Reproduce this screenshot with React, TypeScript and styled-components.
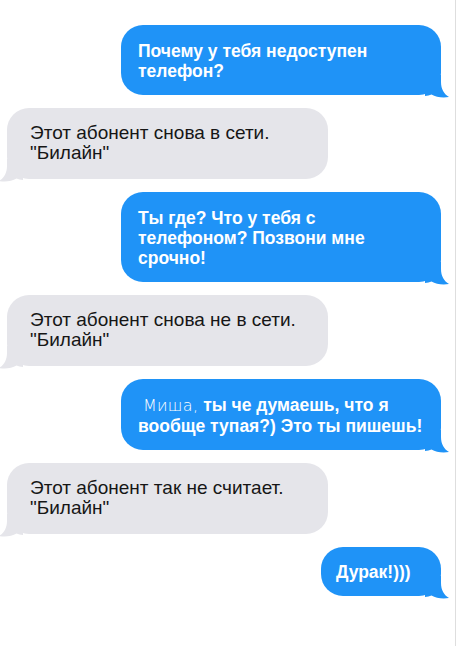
import React from "react";
import styled, { createGlobalStyle } from "styled-components";

const Global = createGlobalStyle`
  html, body { margin: 0; padding: 0; background: #fff; }
  body { font-family: "Liberation Sans", Arial, sans-serif; }
`;

const Screen = styled.div`
  box-sizing: border-box;
  width: 456px;
  min-height: 646px;
  border-right: 1px solid #dedede;
  padding: 25px 0 0;
  display: flex;
  flex-direction: column;
  gap: 13px;
`;

const Row = styled.div<{ $out?: boolean }>`
  display: flex;
  justify-content: ${(p) => (p.$out ? "flex-end" : "flex-start")};
  padding: ${(p) => (p.$out ? "0 14px 0 0" : "0 0 0 7px")};
`;

const Bubble = styled.div<{ $out?: boolean; $w?: number; $short?: boolean }>`
  position: relative;
  box-sizing: border-box;
  width: ${(p) => (p.$w ? `${p.$w}px` : "auto")};
  padding: ${(p) =>
    p.$short ? "15px 16px 14px 15px" : p.$out ? "16px 16px 14px 17px" : "15px 16px 16px 23px"};
  border-radius: 22px;
  background: ${(p) => (p.$out ? "#1f93f7" : "#e5e5ea")};
  color: ${(p) => (p.$out ? "#ffffff" : "#161616")};
  font-size: ${(p) => (p.$out ? "17.5px" : "19px")};
  line-height: 20px;
  font-weight: ${(p) => (p.$out ? 700 : 400)};
  white-space: nowrap;
`;

const Tail = styled.svg<{ $out?: boolean }>`
  position: absolute;
  bottom: -3px;
  width: 24px;
  height: 23px;
  ${(p) => (p.$out ? "right: -8px;" : "left: -8px; transform: scaleX(-1);")}
`;

const Hand = styled.span`
  font-family: "Comic Sans MS", "DejaVu Sans", cursive;
  font-size: 16px;
  font-weight: 300;
  letter-spacing: 0.3px;
`;

function BubbleTail({ out, color }: { out?: boolean; color: string }) {
  return (
    <Tail $out={out} viewBox="0 0 24 23" aria-hidden>
      <path
        d="M0 0 H16 V7 C16 14 19 19 24 22 C17 23 11 22 6.5 19.5 C4.5 20.3 2.5 20.8 0 21 Z"
        fill={color}
      />
    </Tail>
  );
}

type Msg = { out?: boolean; w?: number; short?: boolean; body: React.ReactNode };

const messages: Msg[] = [
  { out: true, w: 320, body: <>Почему у тебя недоступен<br />телефон?</> },
  { w: 321, body: <>Этот абонент снова в сети.<br />"Билайн"</> },
  { out: true, w: 320, body: <>Ты где? Что у тебя с<br />телефоном? Позвони мне<br />срочно!</> },
  { w: 321, body: <>Этот абонент снова не в сети.<br />"Билайн"</> },
  {
    out: true,
    w: 320,
    body: (
      <>
        &nbsp;<Hand>Миша,</Hand> ты че думаешь, что я<br />вообще тупая?) Это ты пишешь!
      </>
    ),
  },
  { w: 321, body: <>Этот абонент так не считает.<br />"Билайн"</> },
  { out: true, w: 120, short: true, body: <>Дурак!)))</> },
];

export default function App() {
  return (
    <>
      <Global />
      <Screen>
        {messages.map((m, i) => (
          <Row key={i} $out={m.out}>
            <Bubble $out={m.out} $w={m.w} $short={m.short}>
              {m.body}
              <BubbleTail out={m.out} color={m.out ? "#1f93f7" : "#e5e5ea"} />
            </Bubble>
          </Row>
        ))}
      </Screen>
    </>
  );
}
